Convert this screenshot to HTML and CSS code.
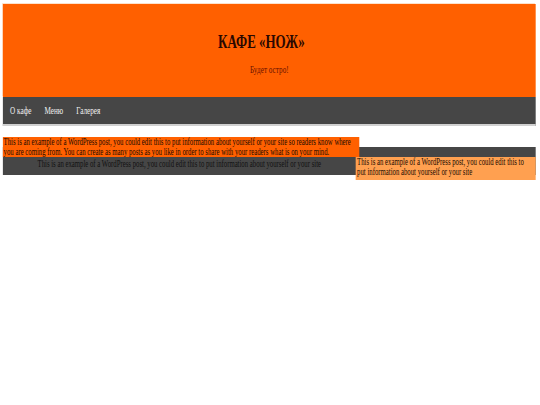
FILE: index.html
```html
<!DOCTYPE html>
<html lang="ru">
<head>
<meta charset="utf-8">
<title>Кафе «Нож»</title>
<link rel="stylesheet" href="styles.css">
</head>
<body>
<div class="frame">
<div class="page">
  <header class="masthead">
    <h1 class="site-title">КАФЕ «НОЖ»</h1>
    <p class="site-desc">Будет остро!</p>
  </header>
  <nav class="menu">
    <a href="#">О кафе</a>
    <a href="#">Меню</a>
    <a href="#">Галерея</a>
  </nav>
  <main class="posts">
    <div class="post post-main">This is an example of a WordPress post, you could edit this to put information about yourself or your site so readers know where you are coming from. You can create as many posts as you like in order to share with your readers what is on your mind.</div>
    <div class="band"></div>
    <div class="post post-center">This is an example of a WordPress post, you could edit this to put information about yourself or your site</div>
    <div class="post post-side">This is an example of a WordPress post, you could edit this to put information about yourself or your site</div>
  </main>
</div>
</div>
</body>
</html>
```
FILE: styles.css
```css
html, body {
  margin: 0;
  padding: 0;
  background: #ffffff;
  overflow: hidden;
}
body {
  width: 540px;
  font-family: "Liberation Serif", "Times New Roman", serif;
  font-size: 9.4px;
}
.frame {
  width: 540px;
  height: 405px;
  overflow: hidden;
}
/* the page is drawn 748px wide and shown horizontally condensed */
.page {
  width: 748px;
  box-sizing: border-box;
  padding: 4px 4px 0 4px;
  transform: scaleX(0.72);
  transform-origin: 0 0;
}
.masthead {
  background: #ff6000;
  height: 93px;
  display: flex;
  flex-direction: column;
  align-items: center;
  box-sizing: border-box;
  padding-top: 28px;
  box-shadow: -1px -1px 0 #fde2cc;
}
.site-title {
  margin: 0 22px 0 0;
  font-size: 18px;
  line-height: 20px;
  font-weight: bold;
  color: #2a0800;
}
.site-desc {
  margin: 12px 0 0;
  font-size: 10px;
  line-height: 12px;
  color: #6a1200;
}
.menu {
  background: #464646;
  height: 27px;
  display: flex;
  align-items: center;
  gap: 18px;
  padding-left: 10px;
  border-bottom: 2px solid #d0d0d0;
}
.menu a {
  color: #f0f0f0;
  text-decoration: none;
  font-size: 10px;
}
.posts {
  margin-top: 11px;
  display: grid;
  grid-template-columns: 490px 5px 245px;
  grid-template-rows: 10px 10px 18px 5px;
}
.post {
  line-height: 10px;
  color: #1a0a00;
}
.post-main {
  grid-column: 1 / 3;
  grid-row: 1 / 3;
  background: #ff6000;
  z-index: 2;
  padding-left: 1px;
}
.band {
  grid-column: 1 / 4;
  grid-row: 2 / 4;
  background: #464646;
}
.post-center {
  grid-column: 1 / 2;
  grid-row: 3 / 4;
  text-align: center;
  padding-top: 2px;
  color: #111;
}
.post-side {
  grid-column: 2 / 4;
  grid-row: 3 / 5;
  background: #ffa050;
  padding: 0 8px 0 2px;
  z-index: 2;
}
```
